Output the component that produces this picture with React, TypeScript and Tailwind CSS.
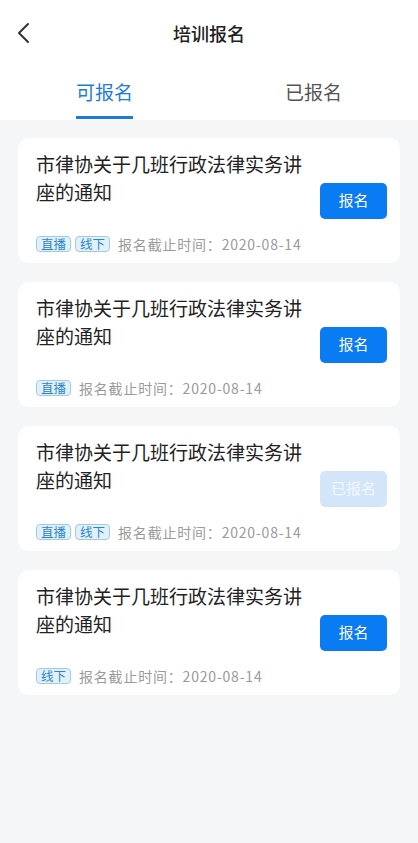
import React from "react";

type Item = {
  tags: string[];
  done: boolean;
};

const items: Item[] = [
  { tags: ["直播", "线下"], done: false },
  { tags: ["直播"], done: false },
  { tags: ["直播", "线下"], done: true },
  { tags: ["线下"], done: false },
];

const FONT = { fontFamily: '"Noto Sans CJK SC", "Noto Sans", sans-serif' };

function Card({ item }: { item: Item }) {
  return (
    <div className="flex items-center rounded-[10px] bg-white pl-[18px] pr-[13px]">
      <div className="flex-1 pt-[12px] pb-[10px]">
        <p className="w-[270px] text-[19px] leading-[28px] text-[#222]">
          市律协关于几班行政法律实务讲座的通知
        </p>
        <div className="mt-[29px] flex h-[18px] items-center">
          {item.tags.map((t) => (
            <span
              key={t}
              className="mr-[4px] flex h-[16px] items-center rounded-[4px] border border-[#9fcbe8] bg-[#e2f0fa] px-[4px] text-[12.5px] leading-none text-[#2a86cc]"
            >
              {t}
            </span>
          ))}
          <span className="ml-[4px] text-[14px] tracking-[0.8px] text-[#9a9a9a]">
            报名截止时间：2020-08-14
          </span>
        </div>
      </div>
      <button
        className={`flex h-[36px] w-[67px] items-center justify-center rounded-[5px] text-[15px] ${
          item.done ? "bg-[#d3e6f9] text-[#f2f7fd]" : "bg-[#0a7cf3] text-white"
        }`}
      >
        {item.done ? "已报名" : "报名"}
      </button>
    </div>
  );
}

export default function App() {
  return (
    <div className="flex min-h-[843px] flex-col bg-[#f5f6f8]" style={FONT}>
      <div className="bg-white">
        <div className="relative flex h-[66px] items-center justify-center">
          <svg
            className="absolute left-[16px] top-[22px]"
            width="16"
            height="22"
            viewBox="0 0 16 22"
            fill="none"
            stroke="#333"
            strokeWidth="2"
            strokeLinecap="round"
            strokeLinejoin="round"
          >
            <path d="M12 2 L3 11 L12 20" />
          </svg>
          <span className="text-[18px] font-medium text-[#222]">培训报名</span>
        </div>
        <div className="flex h-[54px]">
          <div className="relative flex flex-1 items-center justify-center pb-[2px]">
            <span className="text-[19px] text-[#1c7dd6]">可报名</span>
            <span className="absolute bottom-[1px] h-[3px] w-[57px] bg-[#1c7dd6]" />
          </div>
          <div className="flex flex-1 items-center justify-center pb-[2px]">
            <span className="text-[19px] text-[#555]">已报名</span>
          </div>
        </div>
      </div>
      <div className="flex flex-col gap-[19px] px-[18px] pt-[18px]">
        {items.map((it, i) => (
          <Card key={i} item={it} />
        ))}
      </div>
    </div>
  );
}
